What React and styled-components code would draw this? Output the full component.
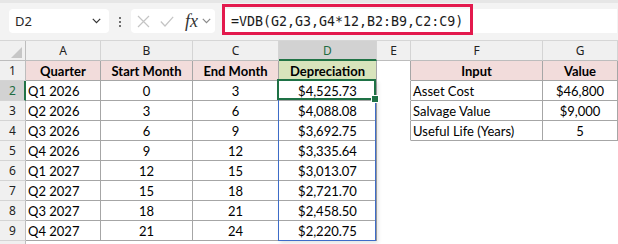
import React from "react";
import styled, { createGlobalStyle } from "styled-components";

const Global = createGlobalStyle`
  html, body { margin: 0; padding: 0; overflow: hidden; background: #ffffff; }
  * { box-sizing: border-box; }
`;

const Page = styled.div`
  width: 618px;
  height: 244px;
  overflow: hidden;
  background: #ffffff;
`;

const Toolbar = styled.div`
  height: 40px;
  background: #f3f3f3;
  border-top: 3px solid #e6e6e6;
  display: flex;
  align-items: flex-start;
  padding: 6px 1px 0 9px;
`;

const NameBox = styled.div`
  width: 100px;
  height: 24px;
  background: #ffffff;
  border-radius: 4px;
  display: flex;
  align-items: center;
  justify-content: space-between;
  padding: 0 8px 0 6px;
  font-family: "Noto Sans", sans-serif;
  font-size: 13px;
  color: #262626;
`;

const Dots = styled.div`
  width: 2px;
  margin: 8px 10px 0 10px;
  display: flex;
  flex-direction: column;
  gap: 2px;
  span {
    width: 2px;
    height: 2px;
    background: #444;
    border-radius: 1px;
  }
`;

const FxBox = styled.div`
  width: 84px;
  height: 24px;
  background: #ffffff;
  border-radius: 4px;
  display: flex;
  align-items: center;
  padding: 0 0 0 6px;
  gap: 10px;
  margin-right: 7px;
`;

const FxLabel = styled.span`
  font-family: "Liberation Serif", serif;
  font-style: italic;
  font-size: 18px;
  color: #333;
  margin-left: 1px;
  margin-right: -6px;
  line-height: 1;
`;

const FormulaBar = styled.div`
  position: relative;
  flex: 1;
  height: 24px;
  background: #ffffff;
  display: flex;
  align-items: center;
  padding-left: 9px;
`;

const FormulaText = styled.span`
  font-family: "DejaVu Sans Mono", monospace;
  font-size: 13.3px;
  color: #1a1a1a;
`;

const Highlight = styled.div`
  position: absolute;
  left: 0;
  top: -5px;
  width: 251px;
  height: 31px;
  border: 3px solid #e3194d;
  pointer-events: none;
`;

const Sheet = styled.div`
  border-top: 1px solid #d6d6d6;
  display: grid;
  grid-template-columns: 26px 75px 92px 86px 98px 34px 132px 75px;
  grid-auto-rows: 20px;
`;

const Corner = styled.div`
  background: #f0f0f0;
  border-right: 1px solid #bdbdbd;
  border-bottom: 1px solid #bdbdbd;
  display: flex;
  align-items: flex-end;
  justify-content: flex-end;
  padding: 0 3px 2px 0;
`;

const ColHead = styled.div`
  background: ${(p) => (p.$selected ? "#d2d2d2" : "#f0f0f0")};
  border-right: 1px solid #d4d4d4;
  border-bottom: ${(p) => (p.$selected ? "2px solid #217346" : "1px solid #bdbdbd")};
  color: ${(p) => (p.$selected ? "#1e6b41" : "#222")};
  font-family: "Noto Sans", sans-serif;
  font-size: 12px;
  display: flex;
  align-items: center;
  justify-content: center;
  padding-top: ${(p) => (p.$selected ? "1px" : "0")};
`;

const RowHead = styled.div`
  background: ${(p) => (p.$selected ? "#d2d2d2" : "#f0f0f0")};
  border-right: ${(p) => (p.$selected ? "2px solid #217346" : "1px solid #bdbdbd")};
  border-bottom: 1px solid #d4d4d4;
  color: ${(p) => (p.$selected ? "#1e6b41" : "#222")};
  font-family: "Noto Sans", sans-serif;
  font-size: 12px;
  display: flex;
  align-items: center;
  justify-content: center;
  padding-left: ${(p) => (p.$selected ? "1px" : "0")};
`;

const Cell = styled.div`
  position: ${(p) => (p.$anchor ? "relative" : "static")};
  background: ${(p) => p.$bg || "#ffffff"};
  border-right: 1px solid ${(p) => (p.$right ? "#a6a6a6" : "transparent")};
  border-bottom: 1px solid ${(p) => (p.$bottom ? "#a6a6a6" : "transparent")};
  font-family: Lato, "Liberation Sans", sans-serif;
  font-size: 13px;
  font-weight: ${(p) => (p.$bold ? 700 : 400)};
  color: #000;
  display: flex;
  align-items: flex-end;
  justify-content: ${(p) => (p.$center ? "center" : "flex-start")};
  padding: 0 2px 1px 2px;
  line-height: 15px;
  white-space: nowrap;
`;

const RangeOutline = styled.div`
  position: absolute;
  left: -1px;
  top: -1px;
  right: 0;
  height: 161px;
  border: 1px solid #3d6cc8;
  box-shadow: 2px 2px 4px rgba(0, 0, 0, 0.12);
  pointer-events: none;
`;

const ActiveOutline = styled.div`
  position: absolute;
  left: -2px;
  top: -2px;
  right: 0;
  bottom: 0;
  border: 2px solid #1e7145;
  pointer-events: none;
`;

const Handle = styled.div`
  position: absolute;
  right: -4px;
  bottom: -4px;
  width: 6px;
  height: 6px;
  background: #1e7145;
  outline: 1px solid #ffffff;
`;

const Chevron = ({ color = "#333" }) => (
  <svg width="9" height="6" viewBox="0 0 9 6">
    <polyline points="0.8,0.8 4.5,4.6 8.2,0.8" fill="none" stroke={color} strokeWidth="1.2" />
  </svg>
);

const CrossIcon = () => (
  <svg width="13" height="13" viewBox="0 0 13 13">
    <path d="M1 1 L12 12 M12 1 L1 12" stroke="#c4c4c4" strokeWidth="1.2" fill="none" />
  </svg>
);

const CheckIcon = () => (
  <svg width="14" height="11" viewBox="0 0 14 11">
    <polyline points="0.8,5.5 5,10 13.2,0.8" stroke="#c4c4c4" strokeWidth="1.2" fill="none" />
  </svg>
);

const CornerTriangle = () => (
  <svg width="11" height="11" viewBox="0 0 11 11">
    <polygon points="11,0 11,11 0,11" fill="#c6c6c6" />
  </svg>
);

const cols = ["A", "B", "C", "D", "E", "F", "G"];

const rows = [
  ["Q1 2026", "0", "3", "$4,525.73", "Asset Cost", "$46,800"],
  ["Q2 2026", "3", "6", "$4,088.08", "Salvage Value", "$9,000"],
  ["Q3 2026", "6", "9", "$3,692.75", "Useful Life (Years)", "5"],
  ["Q4 2026", "9", "12", "$3,335.64"],
  ["Q1 2027", "12", "15", "$3,013.07"],
  ["Q2 2027", "15", "18", "$2,721.70"],
  ["Q3 2027", "18", "21", "$2,458.50"],
  ["Q4 2027", "21", "24", "$2,220.75"],
];

const PINK = "#f2dcdb";
const GREEN = "#d8e4bc";

export default function App() {
  return (
    <Page>
      <Global />
      <Toolbar>
        <NameBox>
          <span>D2</span>
          <Chevron />
        </NameBox>
        <Dots>
          <span />
          <span />
          <span />
        </Dots>
        <FxBox>
          <CrossIcon />
          <CheckIcon />
          <FxLabel>fx</FxLabel>
          <Chevron color="#8a8a8a" />
        </FxBox>
        <FormulaBar>
          <FormulaText>=VDB(G2,G3,G4*12,B2:B9,C2:C9)</FormulaText>
          <Highlight />
        </FormulaBar>
      </Toolbar>
      <Sheet>
        <Corner>
          <CornerTriangle />
        </Corner>
        {cols.map((c) => (
          <ColHead key={c} $selected={c === "D"}>
            {c}
          </ColHead>
        ))}

        <RowHead>1</RowHead>
        <Cell $bg={PINK} $bold $center $right $bottom>Quarter</Cell>
        <Cell $bg={PINK} $bold $center $right $bottom>Start Month</Cell>
        <Cell $bg={PINK} $bold $center $right $bottom>End Month</Cell>
        <Cell $bg={GREEN} $bold $center $right $bottom>Depreciation</Cell>
        <Cell $right />
        <Cell $bg={PINK} $bold $center $right $bottom>Input</Cell>
        <Cell $bg={PINK} $bold $center $right $bottom>Value</Cell>

        {rows.map((r, i) => {
          const n = i + 2;
          const hasInput = r.length > 4;
          return (
            <React.Fragment key={n}>
              <RowHead $selected={n === 2}>{n}</RowHead>
              <Cell $right $bottom>{r[0]}</Cell>
              <Cell $center $right $bottom>{r[1]}</Cell>
              <Cell $center $right $bottom>{r[2]}</Cell>
              <Cell $center $right $bottom $anchor={n === 2}>
                {r[3]}
                {n === 2 && (
                  <>
                    <RangeOutline />
                    <ActiveOutline>
                      <Handle />
                    </ActiveOutline>
                  </>
                )}
              </Cell>
              <Cell $right={hasInput} />
              <Cell $right={hasInput} $bottom={hasInput}>{hasInput ? r[4] : ""}</Cell>
              <Cell $center $right={hasInput} $bottom={hasInput}>{hasInput ? r[5] : ""}</Cell>
            </React.Fragment>
          );
        })}

        <RowHead />
        <Cell />
        <Cell />
        <Cell />
        <Cell />
        <Cell />
        <Cell />
        <Cell />
      </Sheet>
    </Page>
  );
}
